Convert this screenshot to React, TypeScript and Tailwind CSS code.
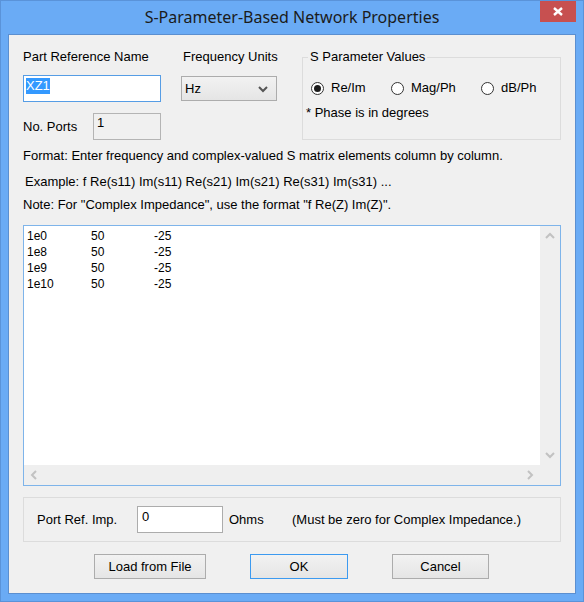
import React from "react";

function Chevron({ dir, color = "#c2c2c2" }: { dir: "up" | "down" | "left" | "right"; color?: string }) {
  const paths: Record<string, string> = {
    up: "M1 6 L5 2 L9 6",
    down: "M1 2 L5 6 L9 2",
    left: "M6 1 L2 5 L6 9",
    right: "M2 1 L6 5 L2 9",
  };
  const horiz = dir === "up" || dir === "down";
  return (
    <svg width={horiz ? 10 : 8} height={horiz ? 8 : 10} viewBox={horiz ? "0 0 10 8" : "0 0 8 10"}>
      <path d={paths[dir]} fill="none" stroke={color} strokeWidth="2" />
    </svg>
  );
}

function Radio({ checked, label, width }: { checked?: boolean; label: string; width?: string }) {
  return (
    <div className={`flex items-center ${width ?? ""}`}>
      <div className="w-[13px] h-[13px] rounded-full border border-[#333333] bg-white flex items-center justify-center">
        {checked && <div className="w-[7px] h-[7px] rounded-full bg-[#1c1c1c]" />}
      </div>
      <span className="ml-[7px]">{label}</span>
    </div>
  );
}

export default function App() {
  return (
    <div className="w-[584px] h-[602px] bg-[#6aabf5] border border-[#5a93d9] px-[7px] pb-[7px] flex flex-col font-['Liberation_Sans',Arial,sans-serif] text-black">
      {/* Title bar */}
      <div className="h-[33px] grid grid-cols-[36px_1fr_36px]">
        <div />
        <div className="flex items-center justify-center font-['Noto_Sans','Open_Sans',sans-serif] text-[16px] text-[#1b1b1b] leading-none pb-[1px]">
          S-Parameter-Based Network Properties
        </div>
        <div className="h-[21px] bg-[#c75050] flex items-center justify-center">
          <svg width="10" height="9" viewBox="0 0 10 9">
            <path d="M1 1 L9 8 M9 1 L1 8" stroke="white" strokeWidth="2.4" />
          </svg>
        </div>
      </div>

      {/* Content */}
      <div className="flex-1 bg-[#f0f0f0] border border-[#5b8fd0] pl-[14px] pt-[14px] text-[13px] leading-[16px]">
        <div className="flex">
          <div className="w-[158px] flex flex-col">
            <div>Part Reference Name</div>
            <div className="mt-[10px] w-[138px] h-[27px] border border-[#569de5] bg-white pl-[2px] pt-[2px]">
              <span className="bg-[#3399ff] text-white inline-block h-[16px] leading-[16px]">XZ1</span>
            </div>
            <div className="mt-[11px] flex items-center">
              <div className="w-[70px]">No. Ports</div>
              <div className="w-[68px] h-[27px] border border-[#b4b4b4] bg-[#f0f0f0] pl-[3px] pt-[1px]">1</div>
            </div>
          </div>
          <div className="w-[121px] flex flex-col">
            <div className="pl-[2px]">Frequency Units</div>
            <div className="mt-[11px] w-[96px] h-[25px] border border-[#acacac] bg-gradient-to-b from-[#f2f2f2] to-[#e5e5e5] flex items-center justify-between pl-[3px] pr-[8px]">
              <span>Hz</span>
              <Chevron dir="down" color="#555555" />
            </div>
          </div>
          <fieldset className="w-[259px] border border-[#dcdcdc] pb-[8px]">
            <legend className="ml-[5px] px-[2px]">S Parameter Values</legend>
            <div className="mt-[15px] flex pl-[8px]">
              <Radio checked label="Re/Im" width="w-[80px]" />
              <Radio label="Mag/Ph" width="w-[90px]" />
              <Radio label="dB/Ph" />
            </div>
            <div className="mt-[9px] pl-[3px]">* Phase is in degrees</div>
          </fieldset>
        </div>

        <div className="mt-[8px]">Format: Enter frequency and complex-valued S matrix elements column by column.</div>
        <div className="mt-[10px] pl-[2px]">Example: f Re(s11) Im(s11) Re(s21) Im(s21) Re(s31) Im(s31) ...</div>
        <div className="mt-[7px]">Note: For "Complex Impedance", use the format "f Re(Z) Im(Z)".</div>

        {/* Text area */}
        <div className="mt-[12px] w-[538px] h-[261px] border border-[#7eb4ea] grid grid-cols-[1fr_20px] grid-rows-[1fr_20px]">
          <div className="bg-white pl-[3px] pt-[2px] text-[12px] leading-[16px]">
            {[["1e0", "50", "-25"], ["1e8", "50", "-25"], ["1e9", "50", "-25"], ["1e10", "50", "-25"]].map((r, i) => (
              <div key={i} className="grid grid-cols-[64px_63px_auto]">
                <span>{r[0]}</span>
                <span>{r[1]}</span>
                <span>{r[2]}</span>
              </div>
            ))}
          </div>
          <div className="bg-[#efefef] flex flex-col justify-between">
            <div className="h-[20px] flex items-center justify-center"><Chevron dir="up" /></div>
            <div className="h-[20px] flex items-center justify-center"><Chevron dir="down" /></div>
          </div>
          <div className="bg-[#efefef] flex justify-between">
            <div className="w-[20px] flex items-center justify-center"><Chevron dir="left" /></div>
            <div className="w-[20px] flex items-center justify-center"><Chevron dir="right" /></div>
          </div>
          <div className="bg-[#efefef]" />
        </div>

        {/* Port Ref */}
        <div className="mt-[11px] w-[538px] h-[45px] border border-[#dcdcdc] flex items-center pl-[13px]">
          <div className="w-[100px]">Port Ref. Imp.</div>
          <div className="w-[86px] h-[27px] border border-[#acacac] bg-white pl-[4px] pt-[2px]">0</div>
          <div className="ml-[6px] w-[63px]">Ohms</div>
          <div>(Must be zero for Complex Impedance.)</div>
        </div>

        {/* Buttons */}
        <div className="mt-[12px] pl-[71px] flex gap-[44px]">
          <div className="w-[112px] h-[25px] border border-[#acacac] bg-gradient-to-b from-[#f2f2f2] to-[#e5e5e5] flex items-center justify-center">Load from File</div>
          <div className="w-[98px] h-[25px] border border-[#3c9af0] bg-gradient-to-b from-[#f2f2f2] to-[#e5e5e5] flex items-center justify-center">OK</div>
          <div className="w-[97px] h-[25px] border border-[#acacac] bg-gradient-to-b from-[#f2f2f2] to-[#e5e5e5] flex items-center justify-center">Cancel</div>
        </div>
      </div>
    </div>
  );
}
